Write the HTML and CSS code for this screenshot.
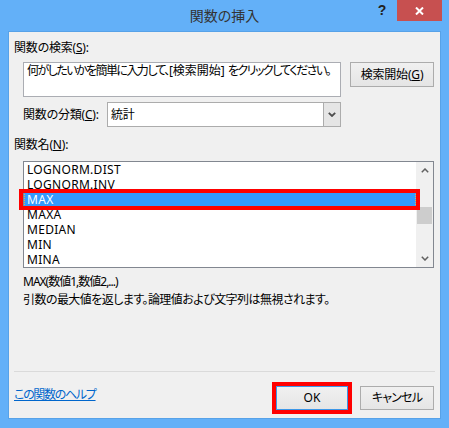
FILE: index.html
```html
<!DOCTYPE html>
<html lang="ja">
<head>
<meta charset="utf-8">
<title>関数の挿入</title>
<link rel="stylesheet" href="styles.css">
</head>
<body>
<div class="window">
  <div class="titlebar">
    <div class="tb-side"></div>
    <div class="title">関数の挿入</div>
    <div class="tb-side controls">
      <span class="help-q">?</span>
      <span class="close"><svg width="9" height="8" viewBox="0 0 9 8"><path d="M1 0.5 L8 7.5 M8 0.5 L1 7.5" stroke="#fff" stroke-width="2" fill="none"/></svg></span>
    </div>
  </div>
  <div class="client">
    <div class="label lbl-search">関数の検索(<u>S</u>):</div>
    <div class="search-row">
      <div class="search-box">何がしたいかを簡単に入力して、<span class="brk">[検索開始] </span>をクリックしてください。</div>
      <div class="btn btn-search">検索開始(<u>G</u>)</div>
    </div>
    <div class="category-row">
      <div class="cat-label">関数の分類(<u>C</u>):</div>
      <div class="select">
        <span class="select-value">統計</span>
        <span class="select-arrow"><svg width="8" height="5" viewBox="0 0 8 5"><path d="M0.8 0.8 L4 4 L7.2 0.8" stroke="#4d4d4d" stroke-width="1.8" fill="none"/></svg></span>
      </div>
    </div>
    <div class="label lbl-names">関数名(<u>N</u>):</div>
    <div class="listbox">
      <div class="items">
        <div class="item">LOGNORM.DIST</div>
        <div class="item">LOGNORM.INV</div>
        <div class="item selected">MAX</div>
        <div class="item">MAXA</div>
        <div class="item">MEDIAN</div>
        <div class="item">MIN</div>
        <div class="item">MINA</div>
      </div>
      <div class="scrollbar">
        <div class="sb-btn"><svg width="8" height="5" viewBox="0 0 8 5"><path d="M0.8 4.2 L4 1 L7.2 4.2" stroke="#606060" stroke-width="1.5" fill="none"/></svg></div>
        <div class="sb-gap"></div>
        <div class="sb-thumb"></div>
        <div class="sb-rest"></div>
        <div class="sb-btn"><svg width="8" height="5" viewBox="0 0 8 5"><path d="M0.8 0.8 L4 4 L7.2 0.8" stroke="#606060" stroke-width="1.5" fill="none"/></svg></div>
      </div>
      <div class="mark-row"></div>
    </div>
    <div class="syntax">MAX(数値1,数値2,...)</div>
    <div class="desc">引数の最大値を返します。論理値および文字列は無視されます。</div>
    <div class="sep"></div>
    <div class="footer">
      <a class="help-link" href="#">この関数のヘルプ</a>
      <div class="ok-mark"><div class="btn btn-ok">OK</div></div>
      <div class="btn btn-cancel">キャンセル</div>
    </div>
  </div>
</div>
</body>
</html>
```

FILE: styles.css
```css
* { box-sizing: border-box; }
html, body { margin: 0; padding: 0; }
body {
  width: 449px;
  height: 428px;
  overflow: hidden;
  font-family: "Noto Sans", "Noto Sans CJK JP", sans-serif;
  font-size: 12px;
  font-feature-settings: "palt";
  letter-spacing: -0.2px;
  color: #000;
  background: #63b0f8;
}
.window {
  width: 449px;
  height: 428px;
  display: flex;
  flex-direction: column;
  background: #63b0f8;
}
.titlebar {
  height: 31px;
  display: grid;
  grid-template-columns: 1fr auto 1fr;
}
.title {
  font-family: "Noto Sans CJK JP", sans-serif;
  font-size: 14px;
  line-height: 31px;
  color: #333;
  letter-spacing: 0;
}
.controls {
  display: flex;
  justify-content: flex-end;
  align-items: flex-start;
  padding-right: 7px;
}
.help-q {
  font-family: "Liberation Sans", sans-serif;
  font-weight: bold;
  font-size: 14px;
  line-height: 21px;
  color: #222;
  margin-right: 11px;
}
.close {
  width: 45px;
  height: 21px;
  background: #c75050;
  display: flex;
  align-items: center;
  justify-content: center;
}
.client {
  flex: 1;
  margin: 0 8px 9px 8px;
  border: 1px solid #57a2e8;
  background: #f0f0f0;
  display: flex;
  flex-direction: column;
}
.label {
  line-height: 16px;
  height: 16px;
  margin-left: 5px;
}
.lbl-search { margin-top: 8px; }
.search-row {
  display: flex;
  align-items: flex-start;
  margin-top: 6px;
  padding-left: 14px;
}
.search-box {
  width: 318px;
  height: 35px;
  border: 1px solid #abadb3;
  background: #fff;
  padding: 0 0 0 3px;
  line-height: 16px;
  letter-spacing: -1.55px;
  white-space: nowrap;
  overflow: hidden;
}
.brk {
  letter-spacing: 0;
}
.btn {
  display: flex;
  align-items: center;
  justify-content: center;
  border: 1px solid #acacac;
  background: linear-gradient(#f0f0f0, #e5e5e5);
  line-height: 16px;
  color: #000;
  white-space: nowrap;
}
.btn-search {
  margin-left: 9px;
  width: 84px;
  height: 25px;
}
.category-row {
  display: flex;
  align-items: center;
  margin-top: 5px;
  padding-left: 14px;
}
.cat-label {
  width: 84px;
  line-height: 16px;
  white-space: nowrap;
}
.select {
  width: 234px;
  height: 25px;
  border: 1px solid #acacac;
  background: #fff;
  display: flex;
  align-items: stretch;
}
.select-value {
  flex: 1;
  padding-left: 3px;
  line-height: 23px;
}
.select-arrow {
  width: 17px;
  background: #e5e5e5;
  border-left: 1px solid #acacac;
  display: flex;
  align-items: center;
  justify-content: center;
}
.lbl-names { margin-top: 10px; }
.listbox {
  position: relative;
  margin-top: 8px;
  margin-left: 14px;
  width: 411px;
  height: 107px;
  border: 1px solid #828790;
  background: #fff;
  display: flex;
}
.items {
  flex: 1;
}
.item {
  height: 15px;
  line-height: 15px;
  padding-left: 3px;
  letter-spacing: 0.3px;
  white-space: nowrap;
}
.item.selected {
  background: #3399ff;
  color: #fff;
  outline: 1px dotted #e0b050;
  outline-offset: -1px;
}
.scrollbar {
  width: 17px;
  background: #f0f0f0;
  display: flex;
  flex-direction: column;
}
.sb-btn {
  height: 17px;
  display: flex;
  align-items: center;
  justify-content: center;
}
.sb-gap { height: 28px; }
.sb-thumb {
  height: 17px;
  margin: 0 1px 0 1px;
  background: #cdcdcd;
}
.sb-rest { flex: 1; }
.mark-row {
  position: absolute;
  left: -5px;
  top: 27px;
  width: 401px;
  height: 21px;
  border: 4px solid #ff0000;
}
.syntax {
  margin-top: 6px;
  margin-left: 14px;
  line-height: 16px;
  letter-spacing: -1px;
}
.desc {
  margin-top: 2px;
  margin-left: 14px;
  line-height: 16px;
  letter-spacing: -0.55px;
  white-space: nowrap;
}
.sep {
  margin-top: 63px;
  margin-left: 5px;
  width: 421px;
  height: 1px;
  background: #dadada;
}
.footer {
  margin-top: 10px;
  height: 32px;
  display: flex;
  align-items: center;
  padding-left: 5px;
  padding-right: 6px;
}
.help-link {
  align-self: flex-start;
  margin-top: 5px;
  line-height: 16px;
  color: #0066cc;
  letter-spacing: -1.3px;
  text-decoration: underline;
}
.ok-mark {
  margin-left: auto;
  width: 80px;
  height: 32px;
  border: 4px solid #ff0000;
}
.btn-ok {
  width: 72px;
  height: 24px;
  border-color: #3c97e8;
  letter-spacing: 0;
}
.btn-cancel {
  margin-left: 8px;
  width: 74px;
  height: 24px;
  letter-spacing: -0.8px;
}
```
